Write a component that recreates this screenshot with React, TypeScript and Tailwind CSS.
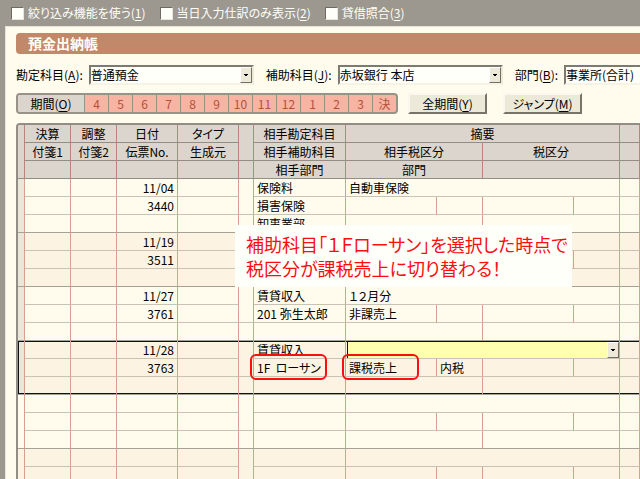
import { useState, type ReactNode } from 'react';
import clsx from 'clsx';

interface LedgerEntry {
  date: string;
  no: string;
  account: string;
  subAccount: string;
  department: string;
  summary: string;
  counterTax: string;
  counterTaxKind: string;
  active?: boolean;
}

const blank = {
  date: '',
  no: '',
  account: '',
  subAccount: '',
  department: '',
  summary: '',
  counterTax: '',
  counterTaxKind: '',
};

const entries: LedgerEntry[] = [
  { ...blank, date: '11/04', no: '3440', account: '保険料', subAccount: '損害保険', department: '卸事業部', summary: '自動車保険' },
  { ...blank, date: '11/19', no: '3511' },
  { ...blank, date: '11/27', no: '3761', account: '賃貸収入', subAccount: '201 弥生太郎', summary: '１２月分', counterTax: '非課売上' },
  { ...blank, date: '11/28', no: '3763', account: '賃貸収入', subAccount: '1F\u00a0\u00a0ローサン', counterTax: '課税売上', counterTaxKind: '内税', active: true },
  blank,
  blank,
];

const months = ['4', '5', '6', '7', '8', '9', '10', '11', '12', '1', '2', '3', '決'];

function Arrow() {
  return (
    <span className="pointer-events-none flex w-3 shrink-0 items-center justify-center border border-t-white border-l-white border-r-[#716f64] border-b-[#716f64] bg-[#ece9d8]">
      <svg width="4" height="2" viewBox="0 0 4 2" shapeRendering="crispEdges">
        <path d="M0 0h4v1H0zM1 1h2v1H1z" fill="#000" />
      </svg>
    </span>
  );
}

function Mnemonic({ text, char }: { text: string; char: string }) {
  return (
    <>
      {text}(<span className="underline underline-offset-2">{char}</span>)
    </>
  );
}

interface FieldProps {
  id: string;
  label: string;
  char: string;
  value: string;
}

function Field({ id, label, char, value }: FieldProps) {
  return (
    <div className="flex shrink-0 items-center">
      <label htmlFor={id} className="pr-1.5 whitespace-nowrap">
        <Mnemonic text={label} char={char} />:
      </label>
      <div className="flex h-5 w-[165px] border-2 border-t-[#7d7a70] border-l-[#7d7a70] border-r-[#ece9d8] border-b-[#f6f3e6] bg-[#fffffa]">
        <select id={id} className="min-w-0 flex-1 appearance-none bg-transparent leading-4 outline-none">
          <option>{value}</option>
        </select>
        <Arrow />
      </div>
    </div>
  );
}

function Check({ label, char }: { label: string; char: string }) {
  return (
    <label className="flex items-center gap-1 whitespace-nowrap">
      <input
        type="checkbox"
        className="size-[13px] appearance-none border border-t-[#6e6a62] border-l-[#6e6a62] border-r-[#e8e5dc] border-b-[#e8e5dc] bg-[#fffffa] checked:bg-gray-700"
      />
      <span>
        <Mnemonic text={label} char={char} />
      </span>
    </label>
  );
}

function PushButton({ children }: { children: ReactNode }) {
  return (
    <button
      type="button"
      className="w-[79px] shrink-0 border-2 border-t-[#faf8ee] border-l-[#faf8ee] border-r-[#77746a] border-b-[#77746a] bg-[#ece9d8] leading-4"
    >
      {children}
    </button>
  );
}

function HeaderCell({ children, colSpan, rowSpan }: { children?: ReactNode; colSpan?: number; rowSpan?: number }) {
  return (
    <th
      colSpan={colSpan}
      rowSpan={rowSpan}
      className="h-[18px] border-r border-b border-r-[#b98479] border-b-[#928e86] bg-[#dcd5cd] p-0 text-center leading-[17px] font-normal"
    >
      {children}
    </th>
  );
}

function Entry({ entry, index }: { entry: LedgerEntry; index: number }) {
  const { active } = entry;
  const cell = 'relative h-[18px] border-r border-b border-r-[#d8a08e] border-b-[#c8c3b4] px-[3px] py-0 leading-[17px]';
  const first = clsx(cell, active && 'shadow-[inset_0_1px_0_#0c1020]');
  const last = clsx(cell, 'border-b-[#a5a195]!', active && 'shadow-[inset_0_-1px_0_#0c1020]');

  return (
    <tbody className={index % 2 ? 'bg-[#fdf3e2]' : 'bg-[#fffcee]'}>
      <tr>
        <td
          rowSpan={3}
          className={clsx(
            'border-r border-b border-r-[#d8a08e] border-b-[#a5a195] p-0',
            entry.date && 'bg-[#e9e8d8]',
            active && 'shadow-[inset_1px_1px_0_#0c1020,inset_0_-1px_0_#0c1020]',
          )}
        />
        <td className={first} />
        <td className={first} />
        <td className={clsx(first, 'text-right')}>{entry.date}</td>
        <td className={first} />
        <td rowSpan={2} className={first} />
        <td className={first}>{entry.account}</td>
        {active ? (
          <td colSpan={4} className={clsx(first, 'pt-px! pr-0! pl-px!')}>
            <div className="flex h-4 border-l border-[#0c1020] bg-[#ffffb0]">
              <select aria-label="摘要" className="min-w-0 flex-1 appearance-none bg-transparent outline-none">
                <option></option>
              </select>
              <Arrow />
            </div>
          </td>
        ) : (
          <td colSpan={4} className={first}>{entry.summary}</td>
        )}
        <td className={first} />
      </tr>
      <tr>
        <td className={cell} />
        <td className={cell} />
        <td className={clsx(cell, 'text-right')}>{entry.no}</td>
        <td className={cell} />
        <td className={cell}>
          {entry.subAccount}
          {active && <Ring />}
        </td>
        <td className={cell}>
          {entry.counterTax}
          {active && <Ring />}
        </td>
        <td className={cell}>{entry.counterTaxKind}</td>
        <td className={cell} />
        <td className={cell} />
        <td className={cell} />
      </tr>
      <tr>
        <td className={last} />
        <td className={last} />
        <td className={last} />
        <td className={last} />
        <td className={last} />
        <td className={last}>{entry.department}</td>
        <td colSpan={2} className={last} />
        <td colSpan={2} className={last} />
        <td className={last} />
      </tr>
    </tbody>
  );
}

// Red marker around a value
function Ring() {
  return <span className="absolute -top-[5px] -left-1 z-10 h-[26px] w-[77px] rounded-md border-2 border-[#fb0d12]" />;
}

export default function App() {
  const [month, setMonth] = useState('');

  return (
    <div className="flex h-screen flex-col overflow-hidden bg-[#9c9890] font-['Noto_Sans_CJK_JP',sans-serif] text-xs text-black [font-feature-settings:'palt']">
      <div className="flex h-[26px] shrink-0 items-center gap-3.5 pl-[11px] text-[#fffff8]">
        <Check label="絞り込み機能を使う" char="1" />
        <Check label="当日入力仕訳のみ表示" char="2" />
        <Check label="貸借照合" char="3" />
      </div>

      <main className="ml-[5px] min-h-0 flex-1 overflow-hidden border-t border-l border-[#e6e3d8] bg-[#fffcee] pt-1.5 pl-2.5">
        <h1 className="rounded-l bg-[#c18969] pl-3 text-sm leading-[21px] font-bold text-[#fffff8]">預金出納帳</h1>

        <div className="mt-[11px] flex gap-3">
          <Field id="account" label="勘定科目" char="A" value="普通預金" />
          <Field id="sub-account" label="補助科目" char="J" value="赤坂銀行 本店" />
          <Field id="department" label="部門" char="B" value="事業所(合計)" />
        </div>

        <div className="mt-2 flex h-[21px]">
          <div className="mr-2.5 flex shrink-0 overflow-hidden rounded border-2 border-[#989389] bg-[#f7b4a2] text-[#b54f3b]">
            <button type="button" className="w-[66px] bg-[#dcd5cd] leading-4 text-black" onClick={() => setMonth('')}>
              <Mnemonic text="期間" char="O" />
            </button>
            {months.map((m) => (
              <button
                key={m}
                type="button"
                onClick={() => setMonth(m)}
                className={clsx('w-6 border-l border-[#989389] leading-4', month === m && 'bg-[#e8937c]')}
              >
                {m}
              </button>
            ))}
          </div>
          <div className="flex gap-4">
            <PushButton>
              <Mnemonic text="全期間" char="Y" />
            </PushButton>
            <PushButton>
              <Mnemonic text="ジャンプ" char="M" />
            </PushButton>
          </div>
        </div>

        <div className="relative mt-[9px] overflow-hidden rounded-tl border-t-2 border-l-2 border-[#928e86]">
          <table className="w-full table-fixed border-separate border-spacing-0">
            <colgroup>
              <col className="w-[7px]" />
              <col className="w-[46px]" />
              <col className="w-[46px]" />
              <col className="w-[61px]" />
              <col className="w-[61px]" />
              <col className="w-[15px]" />
              <col className="w-[92px]" />
              <col className="w-[91px]" />
              <col className="w-[46px]" />
              <col className="w-[91px]" />
              <col className="w-[46px]" />
              <col />
            </colgroup>
            <thead>
              <tr>
                <HeaderCell rowSpan={3} />
                <HeaderCell>決算</HeaderCell>
                <HeaderCell>調整</HeaderCell>
                <HeaderCell>日付</HeaderCell>
                <HeaderCell>タイプ</HeaderCell>
                <HeaderCell rowSpan={2} />
                <HeaderCell>相手勘定科目</HeaderCell>
                <HeaderCell colSpan={4}>摘要</HeaderCell>
                <HeaderCell />
              </tr>
              <tr>
                <HeaderCell>付箋1</HeaderCell>
                <HeaderCell>付箋2</HeaderCell>
                <HeaderCell>伝票No.</HeaderCell>
                <HeaderCell>生成元</HeaderCell>
                <HeaderCell>相手補助科目</HeaderCell>
                <HeaderCell colSpan={2}>相手税区分</HeaderCell>
                <HeaderCell colSpan={2}>税区分</HeaderCell>
                <HeaderCell />
              </tr>
              <tr>
                <HeaderCell />
                <HeaderCell />
                <HeaderCell />
                <HeaderCell />
                <HeaderCell />
                <HeaderCell>相手部門</HeaderCell>
                <HeaderCell colSpan={2}>部門</HeaderCell>
                <HeaderCell colSpan={2} />
                <HeaderCell />
              </tr>
            </thead>
            {entries.map((entry, i) => (
              <Entry key={i} entry={entry} index={i} />
            ))}
          </table>

          <p className="absolute top-[100px] left-[217px] z-10 w-[337px] bg-[#fffffa] py-[7px] pl-[11px] text-lg leading-6 whitespace-nowrap text-[#fb0d12]">
            補助科目「１Ｆローサン」を選択した時点で
            <br />
            税区分が課税売上に切り替わる！
          </p>
        </div>
      </main>
    </div>
  );
}
